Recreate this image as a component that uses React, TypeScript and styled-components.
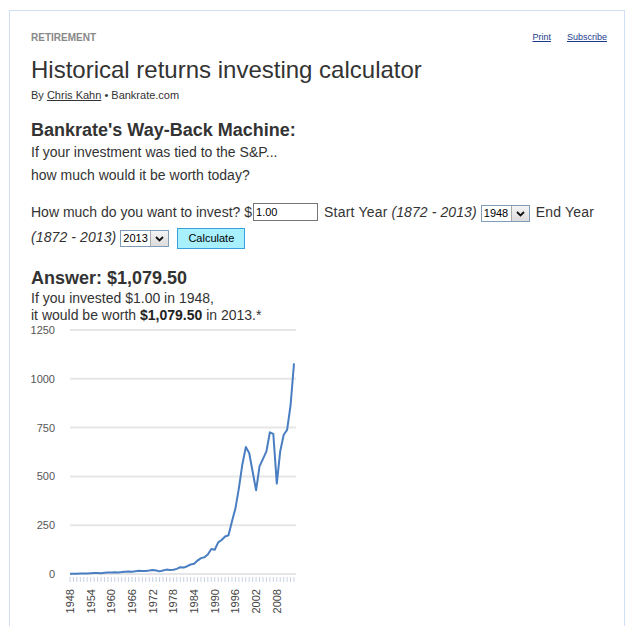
import React from "react";
import styled, { createGlobalStyle } from "styled-components";

const Global = createGlobalStyle`
  html, body { margin: 0; padding: 0; background: #fff; }
  body { font-family: "Liberation Sans", Arial, sans-serif; color: #333; }
`;

const Card = styled.div`
  margin: 10px 0 0 9px;
  width: 616px;
  border: 1px solid #cfdff4;
  border-bottom: none;
  padding: 20px 17px 0 21px;
  min-height: 640px;
  box-sizing: border-box;
`;

const TopBar = styled.div`
  display: flex;
  justify-content: space-between;
  align-items: center;
  height: 12px;
`;

const Section = styled.div`
  font-size: 10px;
  font-weight: bold;
  color: #888;
`;

const Tools = styled.div`
  display: flex;
  gap: 16px;
`;

const ToolLink = styled.a`
  font-size: 9px;
  color: #1b3a8c;
  text-decoration: underline;
`;

const Title = styled.h1`
  margin: 13px 0 0;
  font-size: 24px;
  font-weight: normal;
  line-height: 28px;
  color: #333;
`;

const Byline = styled.div`
  font-size: 11px;
  line-height: 14px;
  margin-top: 4px;
  color: #333;
  a { color: #333; text-decoration: underline; }
`;

const SubHead = styled.h2`
  margin: 17px 0 0;
  font-size: 18px;
  line-height: 22px;
  font-weight: bold;
  color: #333;
`;

const Para = styled.p`
  margin: 0;
  font-size: 14px;
  line-height: 23px;
`;

const Form = styled.div`
  margin-top: 13px;
  font-size: 14px;
  line-height: 25px;
`;

const Italic = styled.i`
  font-style: italic;
  letter-spacing: 0.1px;
`;

const Label = styled.span`
  letter-spacing: 0.2px;
`;

const TextInput = styled.input`
  width: 65px;
  height: 18px;
  box-sizing: border-box;
  border: 1px solid #767676;
  font-family: "Liberation Sans", Arial, sans-serif;
  font-size: 11px;
  padding: 0 2px;
  margin: 0 6px 0 1px;
  vertical-align: 1px;
  color: #000;
`;

const SelectBox = styled.span`
  display: inline-flex;
  align-items: stretch;
  width: 49px;
  height: 17px;
  box-sizing: border-box;
  border: 1px solid #7f9db9;
  margin: 0 6px 0 4px;
  background: #fff;
`;

const SelectText = styled.span`
  flex: 1;
  font-size: 11px;
  line-height: 15px;
  padding: 0 1px 0 2px;
  color: #000;
`;

const SelectArrow = styled.span`
  width: 17px;
  background: linear-gradient(#f4f4f4, #dcdcdc);
  border-left: 1px solid #a9a9a9;
  display: flex;
  align-items: center;
  justify-content: center;
`;

const Button = styled.button`
  height: 21px;
  width: 68px;
  margin-left: 2px;
  border: 1px solid #3aa0dc;
  background: #a8f0fe;
  font-family: "Liberation Sans", Arial, sans-serif;
  font-size: 11px;
  color: #000;
  padding: 0;
`;

const Answer = styled.h2`
  margin: 17px 0 1px;
  font-size: 18px;
  line-height: 22px;
  font-weight: bold;
  color: #333;
`;

const Result = styled.p`
  margin: 0;
  font-size: 14px;
  line-height: 17px;
  b { color: #222; }
`;

const ChartSvg = styled.svg`
  display: block;
  margin-top: -1px;
  overflow: visible;
`;

const Chevron = () => (
  <svg width="9" height="6" viewBox="0 0 9 6">
    <path d="M1 1 L4.5 4.5 L8 1" fill="none" stroke="#111" strokeWidth="1.8" />
  </svg>
);

const Select = ({ value }: { value: string }) => (
  <SelectBox>
    <SelectText>{value}</SelectText>
    <SelectArrow>
      <Chevron />
    </SelectArrow>
  </SelectBox>
);

const data: number[] = [
  1.0, 1.19, 1.57, 1.94, 2.3, 2.27, 3.47, 4.57, 4.87, 4.34, 6.23, 6.97, 7.01, 8.89, 8.12, 9.97,
  11.6, 13.1, 11.8, 14.6, 16.2, 14.8, 15.4, 17.6, 21.0, 17.9, 13.1, 18.0, 22.3, 20.7, 22.1, 26.1,
  34.6, 32.9, 39.9, 48.9, 52.0, 68.8, 81.5, 85.7, 100, 128, 124, 162, 174, 192, 199, 270, 335,
  440, 560, 650, 620, 525, 429, 551, 590, 628, 726, 718, 463, 628, 713, 738, 866, 1079.5,
];

const X0 = 39;
const X1 = 263;
const Y0 = 251;
const YTOP = 7;
const xs = (i: number) => X0 + (i * (X1 - X0)) / 65;
const ys = (v: number) => Y0 - (v * (Y0 - YTOP)) / 1250;

const Chart = () => {
  const grid = [0, 250, 500, 750, 1000, 1250];
  const labels = [1948, 1954, 1960, 1966, 1972, 1978, 1984, 1990, 1996, 2002, 2008];
  const pts = data.map((v, i) => `${xs(i).toFixed(1)},${ys(v).toFixed(1)}`).join(" ");
  return (
    <ChartSvg width="280" height="310" viewBox="0 0 280 310">
      {grid.map((g) => (
        <g key={g}>
          <line x1={X0} x2={X1 + 2} y1={ys(g)} y2={ys(g)} stroke="#e6e6e6" strokeWidth="2" />
          <text
            x={24}
            y={ys(g) + 4}
            textAnchor="end"
            fontSize="11"
            fill="#555"
            fontFamily="Liberation Sans, Arial, sans-serif"
          >
            {g}
          </text>
        </g>
      ))}
      {data.map((_, i) => (
        <line
          key={i}
          x1={xs(i)}
          x2={xs(i)}
          y1={Y0 + 3}
          y2={Y0 + 8}
          stroke="#c9d2e2"
          strokeWidth="1"
        />
      ))}
      {labels.map((yr) => {
        const x = xs(yr - 1948) + 4;
        const y = 266;
        return (
          <text
            key={yr}
            x={x}
            y={y}
            textAnchor="end"
            fontSize="11"
            fill="#444"
            fontFamily="Liberation Sans, Arial, sans-serif"
            transform={`rotate(-90 ${x} ${y})`}
          >
            {yr}
          </text>
        );
      })}
      <polyline
        points={pts}
        fill="none"
        stroke="#4a7ec2"
        strokeWidth="2"
        strokeLinejoin="round"
      />
    </ChartSvg>
  );
};

export default function App() {
  return (
    <>
      <Global />
      <Card>
        <TopBar>
          <Section>RETIREMENT</Section>
          <Tools>
            <ToolLink href="#">Print</ToolLink>
            <ToolLink href="#">Subscribe</ToolLink>
          </Tools>
        </TopBar>
        <Title>Historical returns investing calculator</Title>
        <Byline>
          By <a href="#">Chris Kahn</a> • Bankrate.com
        </Byline>
        <SubHead>Bankrate's Way-Back Machine:</SubHead>
        <Para>If your investment was tied to the S&amp;P...</Para>
        <Para>how much would it be worth today?</Para>
        <Form>
          How much do you want to invest? $
          <TextInput defaultValue="1.00" />
          <Label>Start Year</Label> <Italic>(1872 - 2013)</Italic>
          <Select value="1948" />
          <Label>End Year</Label> <Italic>(1872 - 2013)</Italic>
          <Select value="2013" />
          <Button>Calculate</Button>
        </Form>
        <Answer>Answer: $1,079.50</Answer>
        <Result>If you invested $1.00 in 1948,</Result>
        <Result>
          it would be worth <b>$1,079.50</b> in 2013.*
        </Result>
        <Chart />
      </Card>
    </>
  );
}
